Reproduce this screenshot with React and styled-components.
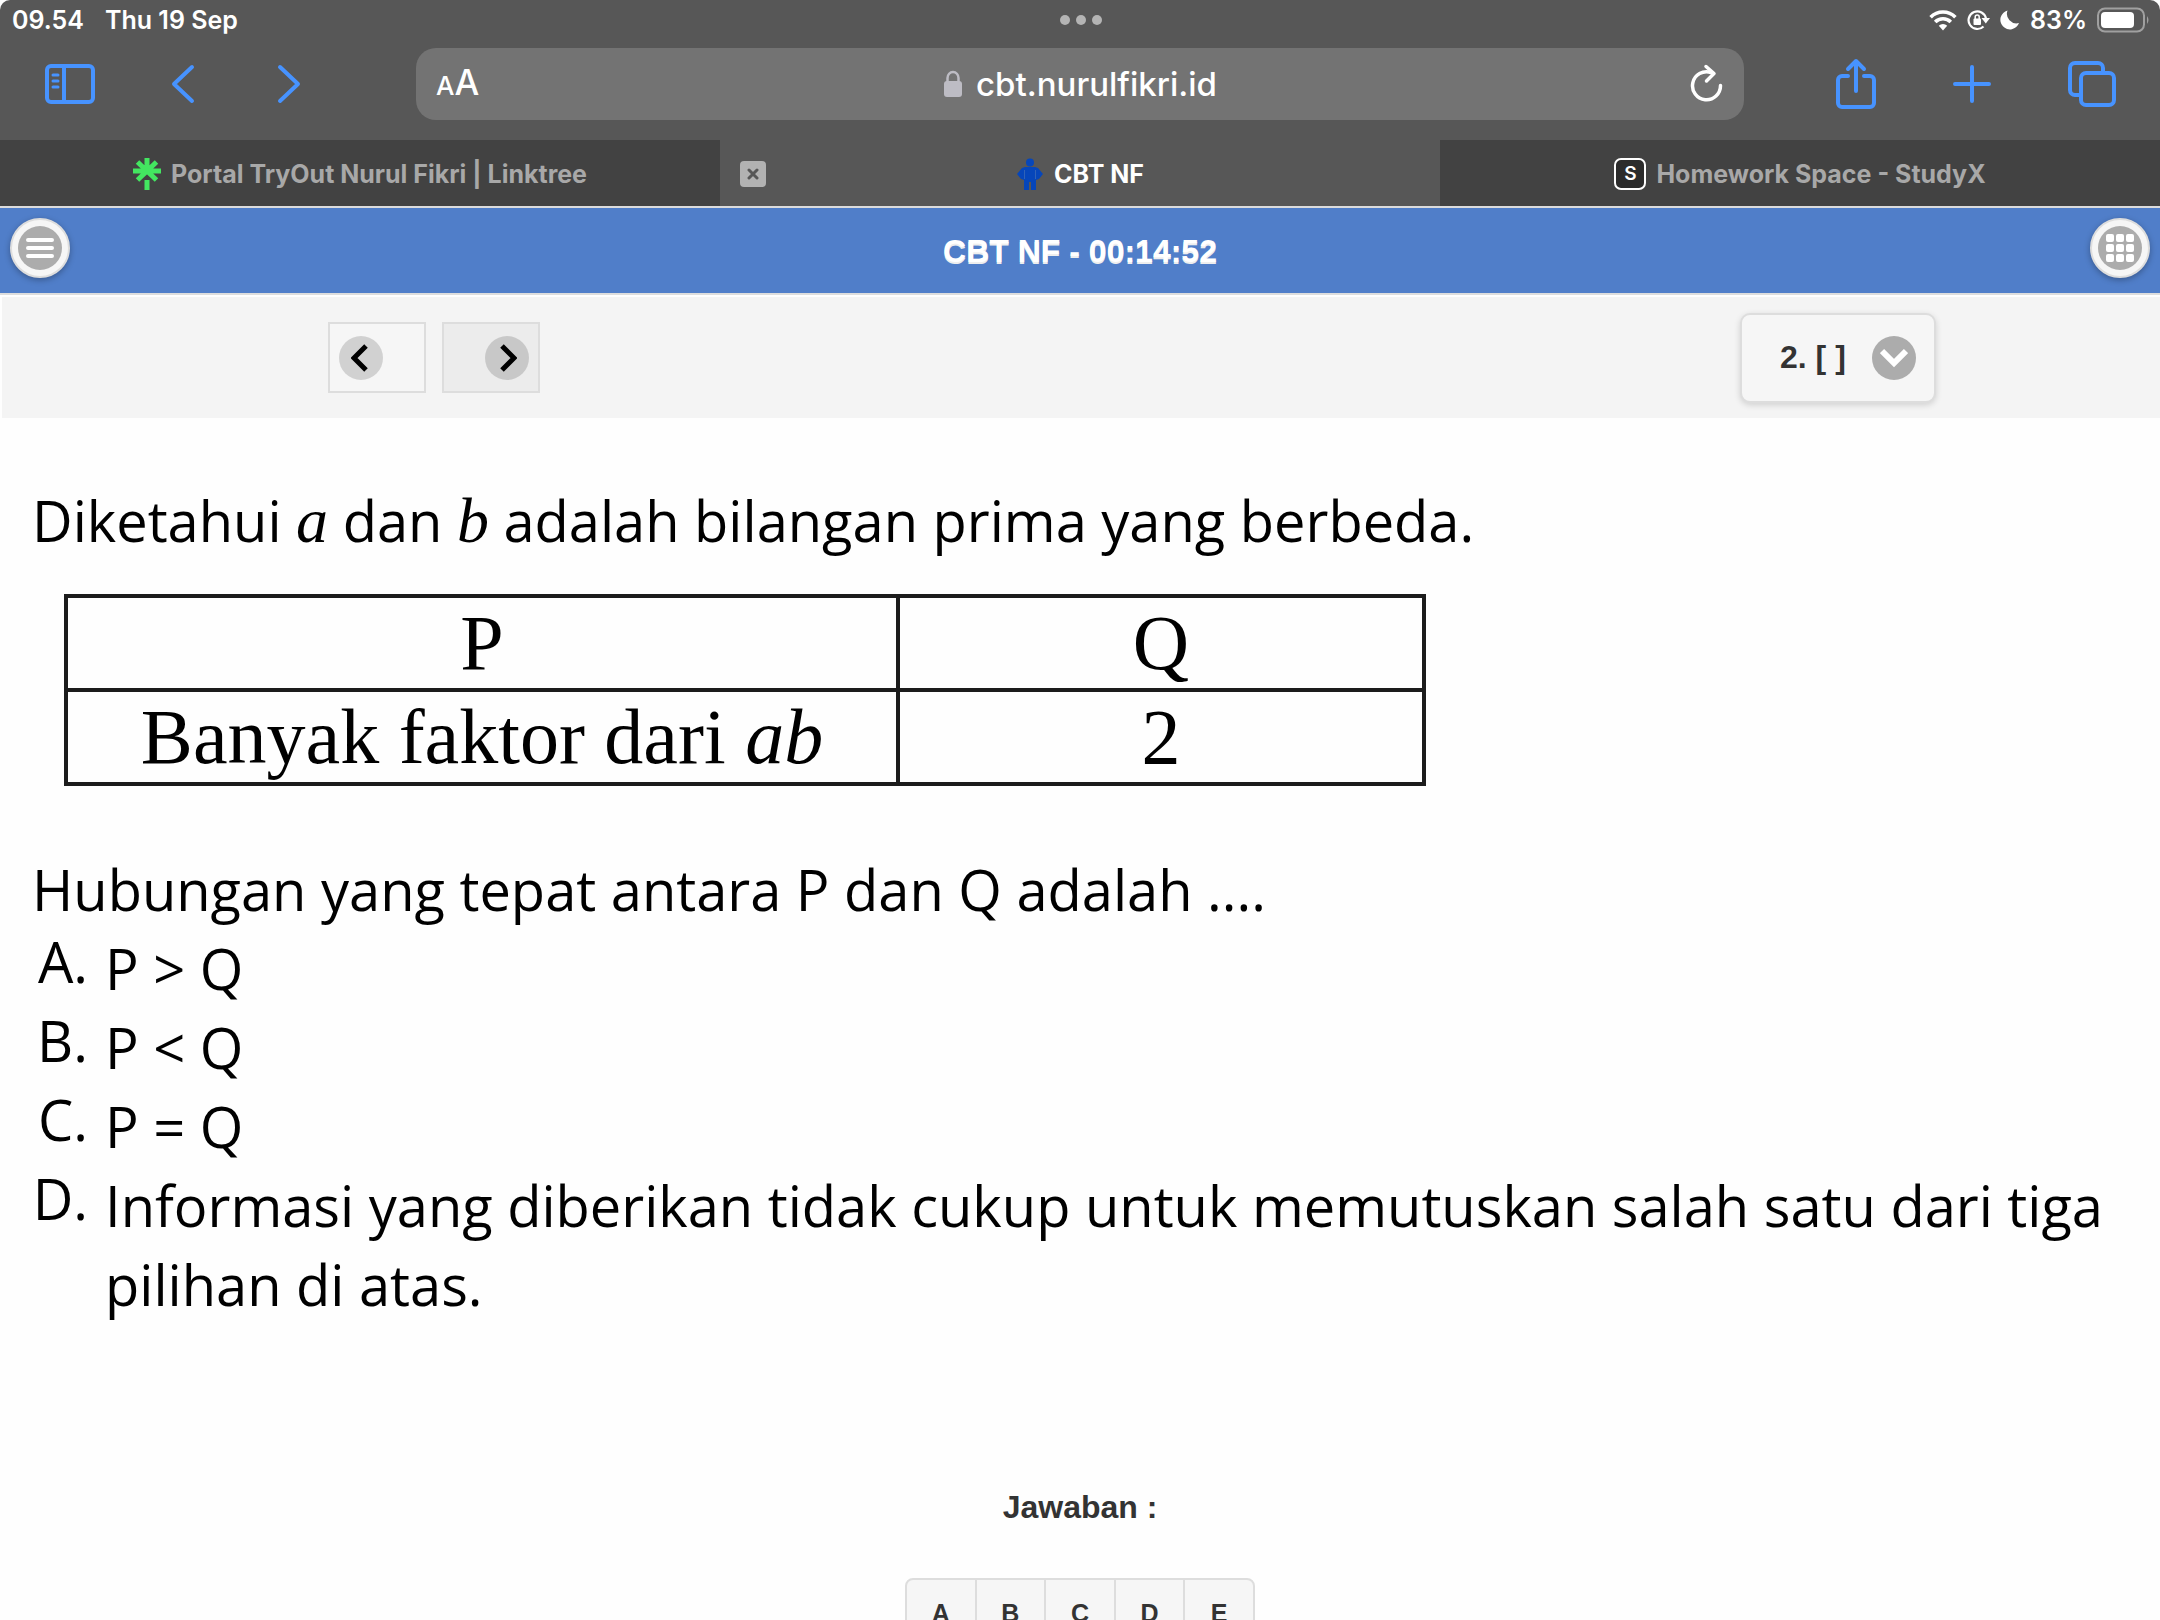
import React from "react";
import styled, { createGlobalStyle } from "styled-components";

const SANS = `Inter, "Liberation Sans", sans-serif`;
const HELV = `"Liberation Sans", Arial, sans-serif`;
const TEXT = `"Open Sans", "Noto Sans", sans-serif`;
const SERIF = `"Liberation Serif", "Times New Roman", serif`;

const GlobalStyle = createGlobalStyle`
  *, *::before, *::after { box-sizing: border-box; }
  body { margin: 0; background: #fff; font-family: ${HELV}; }
  button { font: inherit; color: inherit; margin: 0; padding: 0; border: 0; background: none; cursor: pointer; }
  svg { display: block; }
`;

const Page = styled.div`
  height: 100vh;
  overflow: hidden;
  display: flex;
  flex-direction: column;
  background: #fefefe;
`;

const Chrome = styled.header`
  flex: none;
  background: #575757;
  border-radius: 10px 10px 0 0;
  border-bottom: 2px solid #dcdcdc;
  font-family: ${SANS};
`;

const StatusBar = styled.div`
  display: grid;
  grid-template-columns: 1fr auto 1fr;
  align-items: center;
  height: 40px;
  padding: 0 10px 0 12px;
  color: #fff;
  font-size: 25px;
  font-weight: 600;
  line-height: 40px;
`;

const StatusGroup = styled.div`
  display: flex;
  align-items: center;
  gap: ${(p) => p.$gap}px;
  justify-content: ${(p) => (p.$end ? "flex-end" : "flex-start")};
`;

const Dots = styled.button`
  display: flex;
  gap: 6px;
  span { width: 10px; height: 10px; border-radius: 50%; background: #b4b4b4; }
`;

const Toolbar = styled.div`
  display: flex;
  align-items: center;
  height: 100px;
  padding: 8px 44px 20px;
  color: #4793ff;
`;

const ToolGroup = styled.div`
  flex: none;
  display: flex;
  align-items: center;
  justify-content: space-between;
  width: ${(p) => p.$width}px;
`;

const IconButton = styled.button`
  display: flex;
  align-items: center;
  justify-content: center;
`;

const AddressBar = styled.div`
  flex: 1;
  display: grid;
  grid-template-columns: 1fr auto 1fr;
  align-items: center;
  height: 72px;
  margin: 0 92px 0 114px;
  padding: 0 20px;
  border-radius: 20px;
  background: #737373;
  color: #fff;
`;

const ReaderButton = styled.button`
  justify-self: start;
  font-size: 35px;
  font-weight: 500;
  line-height: 40px;
  small { font-size: 26px; }
`;

const Address = styled.a`
  display: flex;
  align-items: center;
  gap: 13px;
  color: #fff;
  text-decoration: none;
  font-size: 33px;
  font-weight: 500;
  line-height: 40px;
`;

const ReloadButton = styled(IconButton)`
  justify-self: end;
`;

const Tabs = styled.nav`
  display: grid;
  grid-template-columns: repeat(3, 1fr);
  height: 66px;
`;

const Tab = styled.div`
  display: grid;
  grid-template-columns: 26px 1fr 26px;
  align-items: center;
  padding: 2px 20px 0;
  background: ${(p) => (p.$active ? "transparent" : "#424242")};
`;

const TabLink = styled.a`
  grid-column: 2;
  display: flex;
  align-items: center;
  justify-content: center;
  gap: 10px;
  color: ${(p) => (p.$active ? "#fff" : "#a8a8a8")};
  text-decoration: none;
  font-size: 25px;
  font-weight: 700;
  line-height: 32px;
`;

const CloseTab = styled(IconButton)`
  width: 26px;
  height: 26px;
  border-radius: 4px;
  background: #b2b2b2;
  color: #575757;
`;

const StudyIcon = styled.span`
  width: 32px;
  height: 32px;
  border: 2px solid #fff;
  border-radius: 7px;
  background: #2c2c2c;
  color: #fff;
  font-size: 19px;
  font-weight: 600;
  line-height: 28px;
  text-align: center;
`;

const AppHeader = styled.header`
  flex: none;
  display: flex;
  align-items: center;
  justify-content: space-between;
  height: 87px;
  padding: 0 10px;
  border-bottom: 2px solid #dddddd;
  background: #507ec9;
`;

const Title = styled.h1`
  margin: 0;
  color: #fff;
  font-size: 32px;
  font-weight: 700;
  line-height: 40px;
  text-shadow: 0 2px 0 #eeeeee;
`;

const RoundButton = styled(IconButton)`
  width: 60px;
  height: 60px;
  margin-bottom: 6px;
  border: 2px solid #dddddd;
  border-radius: 50%;
  background: #f6f6f6;
  box-shadow: 0 2px 6px rgba(0, 0, 0, 0.3);
`;

const Disc = styled.span`
  display: flex;
  align-items: center;
  justify-content: center;
  flex: none;
  width: 44px;
  height: 44px;
  border-radius: 50%;
  color: ${(p) => (p.$dark ? "#000" : "#fff")};
  background: ${(p) => (p.$dark ? "rgba(0, 0, 0, 0.15)" : "#acacac")};
`;

const QuestionBar = styled.section`
  flex: none;
  display: flex;
  align-items: center;
  justify-content: space-between;
  height: 121px;
  margin: 2px 0 0 2px;
  padding: 0 224px 0 326px;
  background: #f4f4f4;
`;

const Pager = styled.div`
  display: flex;
  gap: 16px;
`;

const PagerButton = styled.button`
  display: flex;
  align-items: center;
  justify-content: ${(p) => (p.$next ? "flex-end" : "flex-start")};
  width: 98px;
  height: 71px;
  padding: 0 9px;
  border: 2px solid #dddddd;
  background: ${(p) => (p.$next ? "#ececec" : "#f6f6f6")};
`;

const JumpButton = styled.button`
  display: flex;
  align-items: center;
  justify-content: space-between;
  width: 196px;
  height: 90px;
  padding: 0 18px 0 38px;
  border: 2px solid #dddddd;
  border-radius: 10px;
  background: #f6f6f6;
  box-shadow: 0 2px 6px rgba(0, 0, 0, 0.15);
  color: #333;
  font-size: 32px;
  font-weight: 700;
`;

const Question = styled.main`
  flex: none;
  padding: 63px 36px 0 32px;
  color: #000;
  font-family: ${TEXT};
  font-size: 56px;
  line-height: 79px;
`;

const Line = styled.p`
  margin: 0;
`;

const MathVar = styled.i`
  font-family: ${SERIF};
  font-size: 64px;
  line-height: 1;
`;

const Compare = styled.table`
  width: 1362px;
  margin: 34px 0 64px 32px;
  border-collapse: collapse;
  table-layout: fixed;
  font-family: ${SERIF};
  font-size: 78px;
  line-height: 90px;
  text-align: center;
  th, td { padding: 0; border: 4px solid #1c1c1c; font-weight: 400; }
  th:first-child { width: 832px; }
`;

const Choices = styled.div`
  display: grid;
  grid-template-columns: 56px 1fr;
  column-gap: 17px;
`;

const ChoiceLabel = styled.span`
  line-height: 65px;
  text-align: right;
`;

const Answer = styled.section`
  flex: none;
  display: flex;
  flex-direction: column;
  align-items: center;
  gap: 51px;
  margin-top: 163px;
  color: #333;
`;

const AnswerTitle = styled.h2`
  margin: 0;
  font-size: 32px;
  font-weight: 700;
  line-height: 40px;
`;

const AnswerGroup = styled.div`
  display: flex;
  width: 350px;
  border: 2px solid #dddddd;
  border-radius: 8px;
  background: #f6f6f6;
`;

const AnswerButton = styled.button`
  flex: 1;
  height: 66px;
  font-size: 25px;
  font-weight: 700;
  & + & { border-left: 2px solid #dddddd; }
`;

const choices = [
  ["A.", "P > Q"],
  ["B.", "P < Q"],
  ["C.", "P = Q"],
  ["D.", "Informasi yang diberikan tidak cukup untuk memutuskan salah satu dari tiga pilihan di atas."],
];

const stroke = { fill: "none", stroke: "currentColor", strokeLinecap: "round", strokeLinejoin: "round" };

const Wifi = () => (
  <svg width="28" height="22" viewBox="0 0 28 22" fill="none" stroke="#fff" strokeWidth="3.600">
    <path d="M1.600 8.200a17.500 17.500 0 0 1 24.800 0" />
    <path d="M6.200 13a11 11 0 0 1 15.600 0" />
    <path d="M14 21.500l-4.200-4.800a6 6 0 0 1 8.400 0z" fill="#fff" stroke="none" />
  </svg>
);

const RotationLock = () => (
  <svg width="23" height="22" viewBox="0 0 23 22" fill="none" stroke="#fff" strokeWidth="2.200">
    <path d="M16.500 17.500A8.800 8.800 0 1 1 19 9.500" />
    <path d="M14.500 9h8.500l-4.200 5.500z" fill="#fff" stroke="none" />
    <rect x="6.500" y="9.500" width="7.500" height="6.500" rx="1" fill="#fff" stroke="none" />
    <path d="M8.200 10V8a2 2 0 0 1 4 0v2" strokeWidth="1.500" />
  </svg>
);

const Lock = () => (
  <svg width="20" height="28" viewBox="0 0 20 28">
    <path d="M4.500 13V8a5.500 6 0 0 1 11 0v5" fill="none" stroke="#bdbcc4" strokeWidth="2.500" />
    <rect x="1" y="11" width="18" height="16" rx="3" fill="#bdbcc4" />
  </svg>
);

export default function App() {
  return (
    <Page>
      <GlobalStyle />
      <Chrome>
        <StatusBar>
          <StatusGroup $gap={21}>
            <span>09.54</span>
            <span>Thu 19 Sep</span>
          </StatusGroup>
          <Dots aria-label="Multitasking"><span /><span /><span /></Dots>
          <StatusGroup $gap={10} $end>
            <Wifi />
            <RotationLock />
            <svg width="20" height="22" viewBox="0 0 20 22">
              <path d="M7.500 1.500A9.600 9.600 0 1 0 19 14 9.600 9.600 0 0 1 7.500 1.500z" fill="#fff" />
            </svg>
            <span>83%</span>
            <svg width="53" height="28" viewBox="0 0 53 28">
              <rect x="1" y="2.500" width="46" height="23" rx="7" fill="none" stroke="#a0a0a0" strokeWidth="2" />
              <rect x="4" y="6" width="33" height="16" rx="4" fill="#fff" />
              <path d="M50 10q3 4 0 8z" fill="#a0a0a0" />
            </svg>
          </StatusGroup>
        </StatusBar>
        <Toolbar>
          <ToolGroup $width={258}>
            <IconButton aria-label="Sidebar">
              <svg width="52" height="40" viewBox="0 0 52 40" {...stroke} strokeWidth="4">
                <rect x="3" y="2" width="46" height="36" rx="4" />
                <path d="M20 2v36" />
                <path d="M9 11h5M9 17h5M9 23h5" strokeWidth="3" />
              </svg>
            </IconButton>
            <ToolGroup $width={132}>
              <IconButton aria-label="Back">
                <svg width="26" height="40" viewBox="0 0 26 40" {...stroke} strokeWidth="4"><path d="M22 3L4 20l18 17" /></svg>
              </IconButton>
              <IconButton aria-label="Forward">
                <svg width="26" height="40" viewBox="0 0 26 40" {...stroke} strokeWidth="4"><path d="M4 3l18 17L4 37" /></svg>
              </IconButton>
            </ToolGroup>
          </ToolGroup>
          <AddressBar>
            <ReaderButton aria-label="Page settings"><small>A</small>A</ReaderButton>
            <Address href="#"><Lock />cbt.nurulfikri.id</Address>
            <ReloadButton aria-label="Reload">
              <svg width="34" height="40" viewBox="0 0 34 40" {...stroke} strokeWidth="3.500">
                <path d="M21 8.500A14 14 0 1 0 30.500 21.500" />
                <path d="M16 2.500l8 7-7.500 7.500" />
              </svg>
            </ReloadButton>
          </AddressBar>
          <ToolGroup $width={280}>
            <IconButton aria-label="Share">
              <svg width="40" height="52" viewBox="0 0 40 52" {...stroke} strokeWidth="4">
                <path d="M12 18H6a4 4 0 0 0-4 4v23a4 4 0 0 0 4 4h28a4 4 0 0 0 4-4V22a4 4 0 0 0-4-4h-6" />
                <path d="M20 33V3M12 11l8-8 8 8" />
              </svg>
            </IconButton>
            <IconButton aria-label="New tab">
              <svg width="38" height="38" viewBox="0 0 38 38" {...stroke} strokeWidth="4"><path d="M19 2v34M2 19h34" /></svg>
            </IconButton>
            <IconButton aria-label="Tabs">
              <svg width="48" height="46" viewBox="0 0 48 46" {...stroke} strokeWidth="4">
                <rect x="13" y="12" width="33" height="32" rx="5" />
                <path d="M11 34H7a5 5 0 0 1-5-5V7a5 5 0 0 1 5-5h23a5 5 0 0 1 5 5v3" />
              </svg>
            </IconButton>
          </ToolGroup>
        </Toolbar>
        <Tabs>
          <Tab>
            <TabLink href="#">
              <svg width="28" height="32" viewBox="0 0 28 32" stroke="#43e660" strokeWidth="5">
                <path d="M14 0v13M0 13h28M4.500 4l19 18M23.500 4l-19 18M14 22v10" />
              </svg>
              Portal TryOut Nurul Fikri | Linktree
            </TabLink>
          </Tab>
          <Tab $active>
            <CloseTab aria-label="Close tab">
              <svg width="12" height="12" viewBox="0 0 12 12" {...stroke} strokeWidth="3"><path d="M2 2l8 8M10 2l-8 8" /></svg>
            </CloseTab>
            <TabLink href="#" $active>
              <svg width="28" height="32" viewBox="0 0 28 32" fill="#0646ba">
                <circle cx="14" cy="4.500" r="4" />
                <path d="M9 9h10l3 1 5 6-4 5-3 1v10h-5v-8h-2v8H8V22l-3-1-4-5 5-6z" />
                <path d="M8.500 12v9M19.500 12v9" stroke="#2f62b8" />
              </svg>
              CBT NF
            </TabLink>
          </Tab>
          <Tab>
            <TabLink href="#">
              <StudyIcon>S</StudyIcon>
              Homework Space - StudyX
            </TabLink>
          </Tab>
        </Tabs>
      </Chrome>

      <AppHeader>
        <RoundButton aria-label="Menu">
          <Disc>
            <svg width="28" height="22" viewBox="0 0 28 22" {...stroke} strokeWidth="4"><path d="M2 3h24M2 11h24M2 19h24" /></svg>
          </Disc>
        </RoundButton>
        <Title>CBT NF - 00:14:52</Title>
        <RoundButton aria-label="Question grid">
          <Disc>
            <svg width="28" height="28" viewBox="0 0 28 28" fill="currentColor">
              {[0, 10, 20].map((y) => [0, 10, 20].map((x) => <rect key={`${x}-${y}`} x={x} y={y} width="8" height="8" rx="2" />))}
            </svg>
          </Disc>
        </RoundButton>
      </AppHeader>

      <QuestionBar>
        <Pager>
          <PagerButton aria-label="Previous">
            <Disc $dark>
              <svg width="20" height="28" viewBox="0 0 20 28" fill="none" stroke="currentColor" strokeWidth="5"><path d="M15 2L3 14l12 12" /></svg>
            </Disc>
          </PagerButton>
          <PagerButton $next aria-label="Next">
            <Disc $dark>
              <svg width="20" height="28" viewBox="0 0 20 28" fill="none" stroke="currentColor" strokeWidth="5"><path d="M5 2l12 12L5 26" /></svg>
            </Disc>
          </PagerButton>
        </Pager>
        <JumpButton>
          <span>2. [ ]</span>
          <Disc>
            <svg width="28" height="20" viewBox="0 0 28 20" fill="none" stroke="currentColor" strokeWidth="6"><path d="M2 3l12 12L26 3" /></svg>
          </Disc>
        </JumpButton>
      </QuestionBar>

      <Question>
        <Line>Diketahui <MathVar>a</MathVar> dan <MathVar>b</MathVar> adalah bilangan prima yang berbeda.</Line>
        <Compare>
          <thead>
            <tr><th scope="col">P</th><th scope="col">Q</th></tr>
          </thead>
          <tbody>
            <tr><td>Banyak faktor dari <i>ab</i></td><td>2</td></tr>
          </tbody>
        </Compare>
        <Line>Hubungan yang tepat antara P dan Q adalah ....</Line>
        <Choices>
          {choices.map(([label, text]) => (
            <React.Fragment key={label}>
              <ChoiceLabel>{label}</ChoiceLabel>
              <span>{text}</span>
            </React.Fragment>
          ))}
        </Choices>
      </Question>

      <Answer>
        <AnswerTitle>Jawaban :</AnswerTitle>
        <AnswerGroup>
          {["A", "B", "C", "D", "E"].map((letter) => <AnswerButton key={letter}>{letter}</AnswerButton>)}
        </AnswerGroup>
      </Answer>
    </Page>
  );
}
